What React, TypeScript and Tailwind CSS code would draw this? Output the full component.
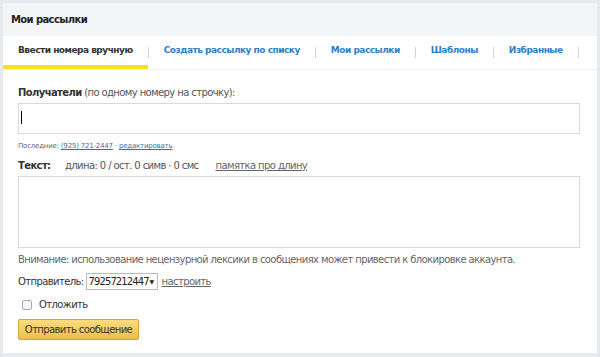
import { useState } from 'react';

const tabs = [
  'Ввести номера вручную',
  'Создать рассылку по списку',
  'Мои рассылки',
  'Шаблоны',
  'Избранные',
];

export default function App() {
  const [active] = useState(0);

  return (
    <div className="w-[600px] h-[357px] bg-[#e6e9ee] pt-[3px] pl-[3px] pr-[3px] pb-[4px] font-['DejaVu_Sans',sans-serif] text-[10px] tracking-[-0.6px] text-[#333]">
      <div className="h-full bg-white flex flex-col">
        <div className="h-[33px] bg-[#f4f5f7] flex items-center px-[8px]">
          <h1 className="font-bold text-[10px] text-[#222]">Мои рассылки</h1>
        </div>

        <div className="h-[34px] flex items-stretch border-b border-[#eef0f3]">
          {tabs.map((t, i) => (
            <div key={t} className="flex items-center">
              <div
                className={`h-full flex items-center px-[15px] font-bold text-[9px] tracking-[-0.5px] whitespace-nowrap border-b-[4px] ${
                  i === active
                    ? 'border-[#ffdf1a] text-[#333]'
                    : 'border-transparent text-[#2e7fc7]'
                }`}
              >
                {t}
              </div>
              <span className="w-px h-[11px] bg-[#d0d3d8]" />
            </div>
          ))}
        </div>

        <div className="px-[15px] pt-[16px]">
          <div className="text-[#555] leading-[14px]">
            <b className="text-[#333]">Получатели</b> (по одному номеру на строчку):
          </div>
          <div className="mt-[3px] w-[562px] h-[31px] border border-[#d7d9de] relative">
            <span className="absolute left-[2px] top-[7px] w-px h-[13px] bg-black" />
          </div>
          <div className="mt-[7px] text-[7px] tracking-[-0.2px] text-[#666] leading-[10px]">
            Последние:{' '}
            <span className="underline text-[#3a6ea5]">(925) 721-2447</span> ·{' '}
            <span className="underline text-[#3a6ea5]">редактировать</span>
          </div>

          <div className="mt-[8px] flex items-center leading-[14px]">
            <b className="text-[#333] w-[47px]">Текст:</b>
            <span className="text-[#555]">длина: 0 / ост. 0 симв · 0 смс</span>
            <span className="ml-[17px] underline text-[#666]">памятка про длину</span>
          </div>
          <div className="mt-[3px] w-[562px] h-[72px] border border-[#d7d9de]" />

          <div className="mt-[5px] text-[#666] leading-[14px]">
            Внимание: использование нецензурной лексики в сообщениях может привести к блокировке аккаунта.
          </div>

          <div className="mt-[6px] flex items-center leading-[14px]">
            <span className="text-[#333]">Отправитель:</span>
            <span className="ml-[2px] h-[17px] w-[72px] border border-[#bbb] flex items-center justify-between pl-[2px] pr-[3px] text-[#222] whitespace-nowrap">
              <span className="tracking-[-0.9px]">79257212447</span>
              <span className="text-[6px]">▼</span>
            </span>
            <span className="ml-[4px] underline text-[#666]">настроить</span>
          </div>

          <label className="mt-[8px] flex items-center gap-[7px] leading-[14px] text-[#333]">
            <span className="w-[10px] h-[10px] border border-[#aaa] rounded-[2px] bg-[#f6f6f6] ml-[4px]" />
            Отложить
          </label>

          <button className="mt-[7px] h-[21px] w-[121px] border border-[#d4a63a] rounded-[2px] bg-gradient-to-b from-[#fbdc7e] to-[#ecbe45] text-[#333] text-[10px] tracking-[-0.6px]">
            Отправить сообщение
          </button>
        </div>
      </div>
    </div>
  );
}
